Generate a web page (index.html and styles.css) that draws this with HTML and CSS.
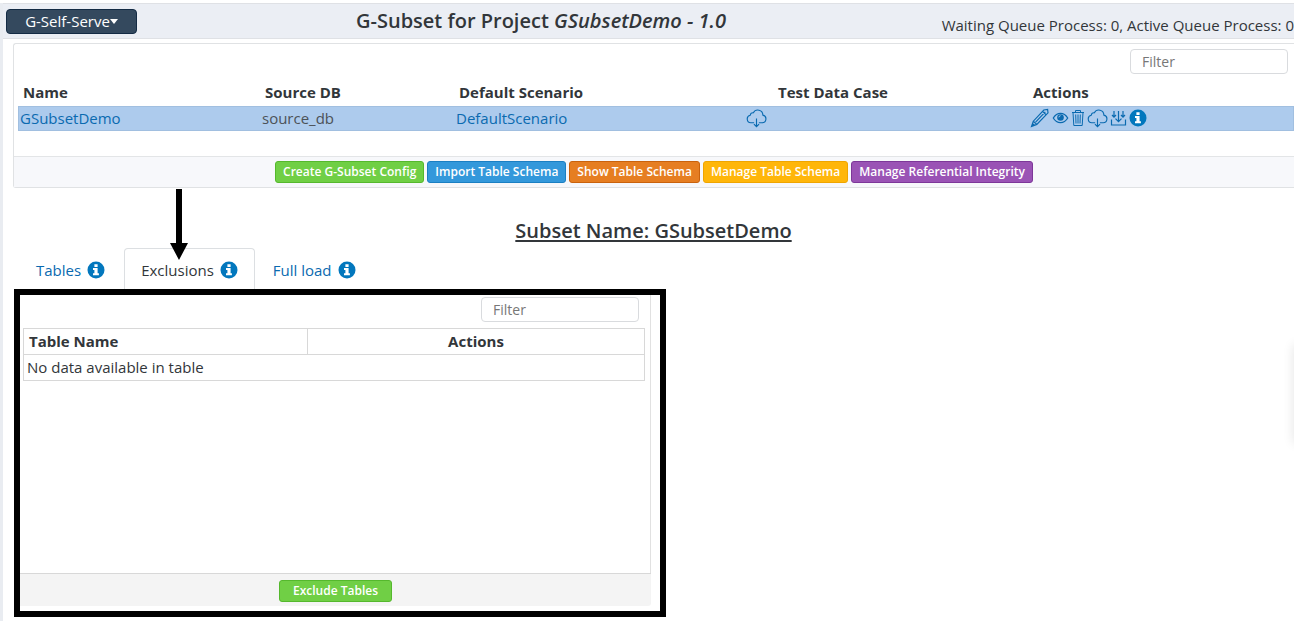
FILE: index.html
```html
<!DOCTYPE html>
<html lang="en">
<head>
<meta charset="utf-8">
<title>G-Subset</title>
<link rel="stylesheet" href="styles.css">
</head>
<body>
<svg class="sprite" aria-hidden="true">
  <symbol id="info" viewBox="0 0 18 18"><circle cx="9" cy="9" r="8.5" fill="#0277bd"/><path fill="#fff" d="M7.4 3.2h3.2v2.7H7.4zM6 7.1h4.6v5.1h1.3v2H6v-2h1.4V9.100H6z"/></symbol>
  <symbol id="cloud" viewBox="0 0 22 20"><path fill="none" stroke="currentColor" stroke-width="1.200" d="M8.500 14.500H5a4 4 0 0 1-.6-7.900 3 3 0 0 1 3.300-2.600 5.300 5.300 0 0 1 10 2.400 4.100 4.100 0 0 1-.7 8.100h-3.500M11 10v8.500M8.300 16l2.700 2.700L13.700 16"/></symbol>
  <symbol id="pencil" viewBox="0 0 20 20"><path fill="none" stroke="currentColor" stroke-width="1.200" d="M1.500 18.500l1.800-5.300L13.800 2l3.800-.5.400 3.300L6.800 16.400zM3.300 13.200l3.500 3.200M5.600 14.200L15.300 3.800M12.500 3.400l3.600 3.300M1.500 18.500l2.700-2.700"/></symbol>
  <symbol id="eye" viewBox="0 0 16 12"><path fill="none" stroke="currentColor" stroke-width="1.300" d="M.8 6C4.500-.2 11.500-.2 15.200 6 11.500 12.200 4.500 12.200.8 6z"/><circle cx="8" cy="5.500" r="3.300" fill="currentColor"/><path fill="none" stroke="#adcbed" d="M6.300 5.300A2 2 0 0 1 8 3.700"/></symbol>
  <symbol id="trash" viewBox="0 0 14 18"><path fill="none" stroke="currentColor" d="M1 3.500h12M4.500 3V1.500h5V3M2 3.500l.8 13h8.400l.8-13M4.700 5.500l.3 9M7 5.500v9M9.300 5.500l-.3 9"/></symbol>
  <symbol id="collect" viewBox="0 0 16 18"><path fill="none" stroke="currentColor" stroke-width="1.200" d="M1 10.500v5.500h14v-5.500M3.500 2v6M1.500 6l2 2.200 2-2.200M12.500 2v6M10.500 6l2 2.200 2-2.200M8 2v10.500M5 9.700l3 3 3-3"/></symbol>
</svg>
<div class="app">
  <header class="topbar">
    <button class="menu-btn" type="button">G-Self-Serve<span class="caret"></span></button>
    <h1 class="title">G-Subset for Project <em>GSubsetDemo - 1.0</em></h1>
    <p class="queue">Waiting Queue Process: 0, Active Queue Process: 0</p>
  </header>
  <main class="main">
    <section class="panel">
      <div class="panel-filter"><input class="filter" type="text" placeholder="Filter" aria-label="Filter subsets"></div>
      <table class="subsets">
        <colgroup><col class="c-name"><col class="c-source"><col class="c-scenario"><col class="c-case"><col></colgroup>
        <thead><tr><th>Name</th><th>Source DB</th><th>Default Scenario</th><th class="case">Test Data Case</th><th>Actions</th></tr></thead>
        <tbody><tr>
          <td><a href="#">GSubsetDemo</a></td><td>source_db</td><td><a href="#">DefaultScenario</a></td>
          <td><a class="icons" href="#" aria-label="Download test data"><svg class="i-cloud"><use href="#cloud"/></svg></a></td>
          <td><span class="icons">
            <a href="#" aria-label="Edit"><svg class="i-pencil"><use href="#pencil"/></svg></a>
            <a href="#" aria-label="View"><svg class="i-eye"><use href="#eye"/></svg></a>
            <a href="#" aria-label="Delete"><svg class="i-trash"><use href="#trash"/></svg></a>
            <a href="#" aria-label="Download"><svg class="i-cloud"><use href="#cloud"/></svg></a>
            <a href="#" aria-label="Import"><svg class="i-collect"><use href="#collect"/></svg></a>
            <a href="#" aria-label="Information"><svg class="i-info"><use href="#info"/></svg></a>
          </span></td>
        </tr></tbody>
      </table>
      <div class="panel-footer">
        <button class="btn green" type="button">Create G-Subset Config</button>
        <button class="btn blue" type="button">Import Table Schema</button>
        <button class="btn orange" type="button">Show Table Schema</button>
        <button class="btn yellow" type="button">Manage Table Schema</button>
        <button class="btn purple" type="button">Manage Referential Integrity</button>
      </div>
    </section>
    <h2 class="subset-name">Subset Name: GSubsetDemo</h2>
    <nav class="tabs">
      <a class="tab" href="#">Tables <svg class="i-info"><use href="#info"/></svg></a>
      <a class="tab active" href="#">Exclusions <svg class="i-info"><use href="#info"/></svg>
        <svg class="arrow" viewBox="0 0 18 71" aria-hidden="true"><path d="M6 0h6v54h6L9 71 0 54h6z"/></svg></a>
      <a class="tab" href="#">Full load <svg class="i-info"><use href="#info"/></svg></a>
    </nav>
    <section class="frame">
      <div class="card">
        <div class="card-body">
          <div class="card-filter"><input class="filter" type="text" placeholder="Filter" aria-label="Filter tables"></div>
          <table class="exclusions">
            <colgroup><col class="c-table"><col></colgroup>
            <thead><tr><th>Table Name</th><th class="center">Actions</th></tr></thead>
            <tbody><tr><td colspan="2">No data available in table</td></tr></tbody>
          </table>
        </div>
        <div class="card-footer"><button class="btn green wide" type="button">Exclude Tables</button></div>
      </div>
    </section>
  </main>
  <div class="drawer"></div>
</div>
</body>
</html>
```
FILE: styles.css
```css
* { box-sizing: border-box; }
body {
  margin: 0;
  padding: 3px 3px 10px 0;
  min-height: 100vh;
  display: flex;
  background: #fff;
  color: #32363a;
  font: 15px/20px "Open Sans", sans-serif;
}
a { color: #0a6ab0; text-decoration: none; }
input, button { font-family: inherit; }
.sprite { position: absolute; width: 0; height: 0; }
.app {
  position: relative;
  flex: 1;
  min-width: 0;
  overflow: hidden;
  border-left: 3px solid #e9ecf1;
}
.topbar {
  display: flex;
  align-items: center;
  height: 36px;
  margin-left: -3px;
  padding-left: 6px;
  background: #ebeef4;
  border-top: 1px solid #dfe1e5;
  border-bottom: 1px solid #dfe1e5;
}
.menu-btn {
  display: flex;
  align-items: center;
  justify-content: center;
  width: 131px;
  height: 25px;
  padding: 0;
  color: #fff;
  font-size: 15px;
  background: #34495e;
  border: 1px solid #142b44;
  border-radius: 4px;
}
.caret {
  border: 4px solid transparent;
  border-top: 5px solid #fff;
  border-bottom: 0;
}
.title { flex: 1; margin: 0 0 0 219px; font-size: 20px; line-height: 24px; font-weight: 600; }
.queue { margin: 7px 0 0; white-space: nowrap; }
.main { padding: 4px 0 3px 10px; }
.panel {
  border: 1px solid #e0e2e4;
  border-right: 0;
  border-radius: 3px 0 0 3px;
}
.panel-filter { display: flex; justify-content: flex-end; padding: 5px 6px 4px; }
.filter {
  width: 158px;
  height: 25px;
  padding: 0 11px;
  color: #555;
  font-size: 14px;
  border: 1px solid #d9dbde;
  border-radius: 4px;
}
.filter::placeholder { color: #777; }
table { border-collapse: collapse; table-layout: fixed; }
th { text-align: left; font-weight: 700; }
.subsets { width: calc(100% - 4px); margin: 0 0 25px 4px; }
.subsets th { height: 28px; padding: 0 5px; }
.subsets td { height: 25px; padding: 0 2px 1px; color: #4c5258; }
.subsets td a { color: #0a6ab0; }
.subsets tbody tr { background: #adcbed; box-shadow: inset 0 0 0 1px #a1bfe0; }
.c-name { width: 242px; }
.c-source { width: 194px; }
.c-scenario { width: 290px; }
.c-case { width: 284px; }
.subsets .case { padding-left: 34px; }
.icons { display: flex; align-items: center; gap: 2px; }
.icons a { display: flex; }
svg { display: block; }
.i-cloud { width: 21px; height: 19px; }
.i-pencil { width: 20px; height: 20px; }
.i-eye { width: 17px; height: 12px; }
.i-trash { width: 14px; height: 18px; }
.i-collect { width: 17px; height: 18px; }
.i-info { width: 18px; height: 18px; }
.panel-footer {
  display: flex;
  justify-content: center;
  gap: 3px;
  padding: 4px;
  background: #f7f8fb;
  border-top: 1px solid #e3e5e7;
}
.btn {
  height: 22px;
  padding: 0 7px;
  color: #fff;
  font-size: 12px;
  font-weight: 600;
  line-height: 18px;
  white-space: nowrap;
  border: 1px solid;
  border-radius: 3px;
}
.green { background: #70cf45; border-color: #55b82d; }
.blue { background: #3398db; border-color: #1b7fc2; }
.orange { background: #e67e22; border-color: #c9620d; }
.yellow { background: #ffb60a; border-color: #efa500; }
.purple { background: #9a53b5; border-color: #7d3799; }
.wide { padding: 0 13px; }
.subset-name {
  margin: 30px 0 0;
  text-align: center;
  font-size: 20px;
  line-height: 26px;
  font-weight: 600;
  text-decoration: underline;
  text-decoration-thickness: 2px;
  text-underline-offset: 2px;
}
.tabs { display: flex; gap: 1px; margin-top: 4px; padding-left: 5px; }
.tab {
  position: relative;
  display: flex;
  align-items: center;
  gap: 6px;
  height: 41px;
  padding: 1px 16px 0;
  border: 1px solid transparent;
  border-bottom: 0;
  border-radius: 4px 4px 0 0;
}
.tab:first-child { padding: 1px 17px 0; }
.tab.active { color: #32363a; border-color: #dcdfe2; }
.arrow { position: absolute; left: 45px; top: -60px; width: 18px; height: 71px; }
.frame {
  width: 652px;
  max-width: 100%;
  margin-left: 1px;
  padding: 0 9px 5px 0;
  border: 6px solid #000;
}
.card-body { min-height: 278px; border-right: 1px solid #e1e1e1; padding: 2px 5px 0 3px; }
.card-filter { display: flex; justify-content: flex-end; padding: 0 6px; margin-bottom: 6px; }
.exclusions { width: 100%; }
.exclusions th, .exclusions td { height: 26px; padding: 0 3px 1px; border: 1px solid #d8d8d8; }
.exclusions th { padding: 0 5px 1px; }
.exclusions .center { text-align: center; }
.c-table { width: 284px; }
.card-footer {
  display: flex;
  justify-content: center;
  padding: 6px 1px 4px;
  background: #f4f4f4;
  border-top: 1px solid #d8d8d8;
  border-radius: 0 0 3px 0;
}
.drawer {
  position: absolute;
  top: 342px;
  right: -10px;
  width: 10px;
  height: 98px;
  box-shadow: 0 0 12px rgba(0, 0, 0, .12);
}
```
